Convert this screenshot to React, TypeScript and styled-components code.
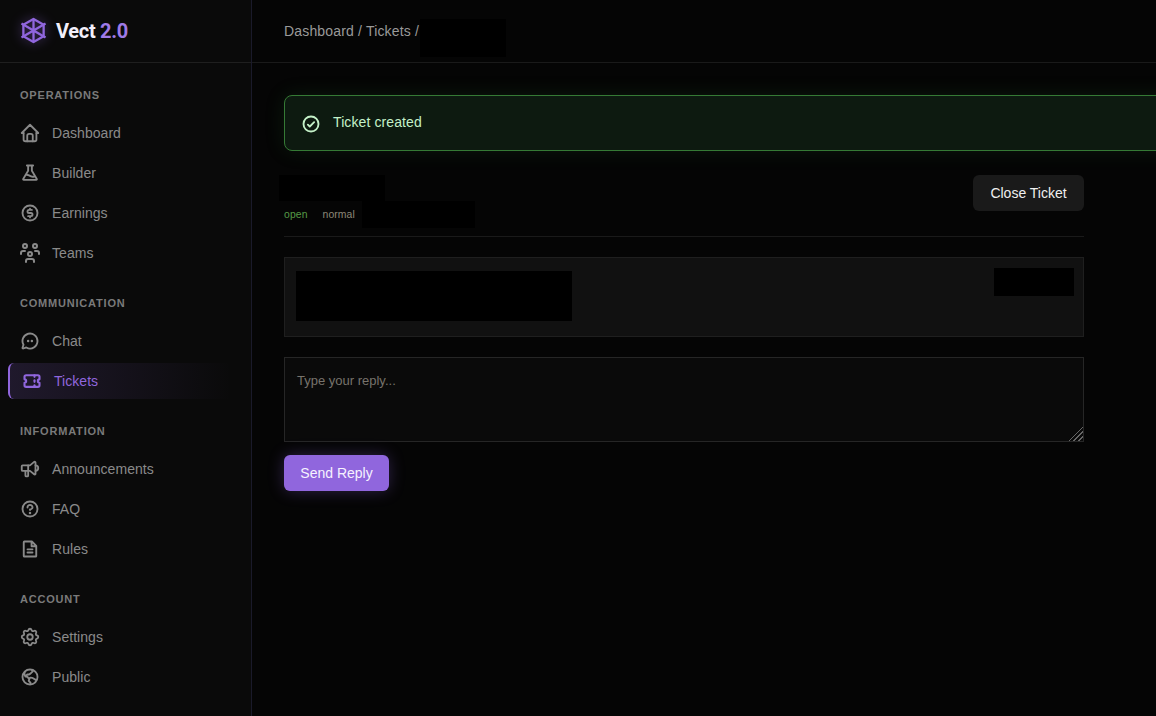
import React from "react";
import styled, { createGlobalStyle } from "styled-components";
import {
  PiFlaskBold,
  PiCurrencyCircleDollarBold,
  PiChatCircleDotsBold,
  PiQuestionBold,
  PiFileTextBold,
  PiGlobeHemisphereWestBold,
  PiCheckCircleBold,
} from "react-icons/pi";
import { TbHome, TbUsersGroup, TbTicket, TbSpeakerphone, TbSettings } from "react-icons/tb";

const GlobalStyle = createGlobalStyle`
  html, body {
    margin: 0;
    height: 100%;
    background: #050505;
    overflow: hidden;
  }
  * {
    box-sizing: border-box;
  }
  #root {
    height: 100%;
  }
`;

const sections = [
  {
    title: "OPERATIONS",
    items: [
      { label: "Dashboard", icon: TbHome, iconSize: 22 },
      { label: "Builder", icon: PiFlaskBold },
      { label: "Earnings", icon: PiCurrencyCircleDollarBold },
      { label: "Teams", icon: TbUsersGroup, iconSize: 24 },
    ],
  },
  {
    title: "COMMUNICATION",
    items: [
      { label: "Chat", icon: PiChatCircleDotsBold },
      { label: "Tickets", icon: TbTicket, active: true },
    ],
  },
  {
    title: "INFORMATION",
    items: [
      { label: "Announcements", icon: TbSpeakerphone, iconSize: 22 },
      { label: "FAQ", icon: PiQuestionBold },
      { label: "Rules", icon: PiFileTextBold },
    ],
  },
  {
    title: "ACCOUNT",
    items: [
      { label: "Settings", icon: TbSettings, iconSize: 22 },
      { label: "Public", icon: PiGlobeHemisphereWestBold },
    ],
  },
];

function Logo() {
  return (
    <LogoMark viewBox="0 0 28 28" fill="none" stroke="#9066dd" strokeWidth="2.4" strokeLinejoin="round">
      <path d="M14 2 L24.5 8 V20 L14 26 L3.5 20 V8 Z" />
      <path d="M14 2 V26 M1.5 6.8 L26.5 21.2 M26.5 6.8 L1.5 21.2" />
    </LogoMark>
  );
}

export default function App() {
  return (
    <>
      <GlobalStyle />
      <Layout>
        <Sidebar>
          <Brand>
            <Logo />
            <BrandName>
              Vect <span>2.0</span>
            </BrandName>
          </Brand>
          <Nav>
            {sections.map((section) => (
              <NavSection key={section.title}>
                <SectionTitle>{section.title}</SectionTitle>
                {section.items.map((item) => (
                  <NavItem key={item.label} $active={item.active} $iconSize={item.iconSize ?? 20}>
                    <item.icon />
                    <span>{item.label}</span>
                  </NavItem>
                ))}
              </NavSection>
            ))}
          </Nav>
        </Sidebar>
        <Main>
          <TopBar>
            <Crumbs>Dashboard / Tickets /</Crumbs>
            <CrumbRedaction />
          </TopBar>
          <Content>
            <Alert>
              <PiCheckCircleBold />
              <span>Ticket created</span>
            </Alert>
            <TicketPanel>
              <TicketHead>
                <div>
                  <TitleRedaction />
                  <MetaRow>
                    <Status>open</Status>
                    <Priority>normal</Priority>
                    <MetaRedaction />
                  </MetaRow>
                </div>
                <CloseButton>Close Ticket</CloseButton>
              </TicketHead>
              <Message>
                <MessageRedaction />
                <DateRedaction />
              </Message>
              <ReplyBox placeholder="Type your reply..." />
              <SendButton>Send Reply</SendButton>
            </TicketPanel>
          </Content>
        </Main>
      </Layout>
    </>
  );
}

const Layout = styled.div`
  display: flex;
  height: 716px;
  overflow: hidden;
  font-family: "Liberation Sans", Arial, sans-serif;
`;

const Sidebar = styled.aside`
  flex: 0 0 252px;
  background: #0a0a0a;
  border-right: 1px solid #1a1a2a;
`;

const Brand = styled.div`
  height: 63px;
  display: flex;
  align-items: center;
  gap: 9px;
  padding: 0 0 1px 20px;
  border-bottom: 1px solid #1f1f1f;
`;

const LogoMark = styled.svg`
  width: 27px;
  height: 27px;
  filter: drop-shadow(0 0 6px rgba(144, 102, 221, 0.45));
`;

const BrandName = styled.div`
  font-family: Roboto, sans-serif;
  font-size: 20px;
  font-weight: 700;
  letter-spacing: -0.3px;
  color: #f2effa;
  span {
    color: #9f7ae6;
  }
`;

const Nav = styled.nav`
  padding: 16px 8px 0;
`;

const NavSection = styled.div`
  margin-bottom: 16px;
`;

const SectionTitle = styled.div`
  height: 32px;
  margin-bottom: 4px;
  padding: 0 12px;
  display: flex;
  align-items: center;
  font-size: 11px;
  font-weight: 700;
  letter-spacing: 0.8px;
  color: #7a7a7a;
`;

const NavItem = styled.div<{ $active?: boolean; $iconSize: number }>`
  height: 36px;
  margin-bottom: 4px;
  display: flex;
  align-items: center;
  gap: 12px;
  width: 224px;
  padding-left: 12px;
  font-size: 14px;
  letter-spacing: 0.05px;
  border-radius: 6px;
  color: ${(p) => (p.$active ? "#9066dd" : "#8a8a8a")};
  border-left: ${(p) => (p.$active ? "2px solid #9066dd" : "0")};
  background: ${(p) =>
    p.$active ? "linear-gradient(90deg, rgba(144, 102, 221, 0.16), rgba(144, 102, 221, 0))" : "none"};
  svg {
    width: ${(p) => p.$iconSize}px;
    height: ${(p) => p.$iconSize}px;
    margin: 0 ${(p) => (20 - p.$iconSize) / 2}px;
    flex: none;
    ${(p) => (p.$active ? "stroke-width: 2.5;" : "")}
  }
`;

const Main = styled.main`
  flex: 1;
  min-width: 0;
  background: #050505;
`;

const TopBar = styled.header`
  height: 63px;
  padding: 0 32px;
  display: flex;
  align-items: center;
  border-bottom: 1px solid #1a1a1a;
  font-size: 14px;
  letter-spacing: 0.17px;
  color: #9a9a9a;
`;

const Crumbs = styled.div`
  margin-bottom: 1px;
`;

const Redaction = styled.div`
  background: #000;
`;

const CrumbRedaction = styled(Redaction)`
  width: 86px;
  height: 38px;
  margin: 13px 0 0 1px;
`;

const Content = styled.div`
  padding: 32px;
  width: 940px;
`;

const Alert = styled.div`
  width: 1000px;
  height: 56px;
  display: flex;
  align-items: center;
  gap: 12px;
  padding: 0 16px;
  margin-bottom: 24px;
  border: 1px solid #357a35;
  border-radius: 8px;
  background: #0d1a10;
  box-shadow: 0 0 20px rgba(50, 140, 60, 0.15);
  color: #c4f1c8;
  font-size: 14px;
  letter-spacing: 0.1px;
  svg {
    width: 20px;
    height: 20px;
    margin-top: 2px;
    flex: none;
  }
  span {
    margin-bottom: 2px;
  }
`;

const TicketPanel = styled.section`
  width: 800px;
`;

const TicketHead = styled.div`
  display: flex;
  justify-content: space-between;
  align-items: flex-start;
  height: 62px;
  margin-bottom: 20px;
  border-bottom: 1px solid #1a1a1a;
`;

const TitleRedaction = styled(Redaction)`
  width: 106px;
  height: 26px;
  margin-left: -5px;
`;

const MetaRow = styled.div`
  display: flex;
  align-items: center;
  height: 27px;
  font-size: 10.4px;
  letter-spacing: 0.1px;
`;

const Status = styled.span`
  color: #569a46;
  margin-right: 15px;
`;

const Priority = styled.span`
  color: #8c8878;
`;

const MetaRedaction = styled(Redaction)`
  width: 113px;
  height: 27px;
  margin-left: 7px;
`;

const CloseButton = styled.button`
  width: 111px;
  height: 36px;
  border: 0;
  border-radius: 6px;
  background: #1a1a1a;
  color: #f0f0f0;
  font: 14px "Liberation Sans", Arial, sans-serif;
`;

const Message = styled.div`
  display: flex;
  justify-content: space-between;
  align-items: flex-start;
  height: 80px;
  padding: 10px 9px 0 11px;
  margin-bottom: 20px;
  background: #111;
  border: 1px solid #1f1f1f;
`;

const MessageRedaction = styled(Redaction)`
  width: 276px;
  height: 50px;
  margin-top: 3px;
`;

const DateRedaction = styled(Redaction)`
  width: 80px;
  height: 28px;
`;

const ReplyBox = styled.textarea`
  display: block;
  width: 800px;
  height: 85px;
  padding: 13px 12px 12px;
  margin-bottom: 13px;
  background: #0a0a0a;
  border: 1px solid #262626;
  border-radius: 0;
  color: #ddd;
  font: 13px/1.5 "Liberation Sans", Arial, sans-serif;
  outline: none;
  &::placeholder {
    color: #77736c;
  }
  &::-webkit-resizer {
    background:
      linear-gradient(135deg, #0a0a0a 50%, transparent 50%),
      repeating-linear-gradient(135deg, #666 0 1px, transparent 1px 3.5px);
  }
`;

const SendButton = styled.button`
  width: 105px;
  height: 36px;
  border: 0;
  border-radius: 6px;
  background: #9066dd;
  color: #f6f2ff;
  font: 14px "Liberation Sans", Arial, sans-serif;
  box-shadow: 0 0 16px rgba(144, 102, 221, 0.3);
`;
